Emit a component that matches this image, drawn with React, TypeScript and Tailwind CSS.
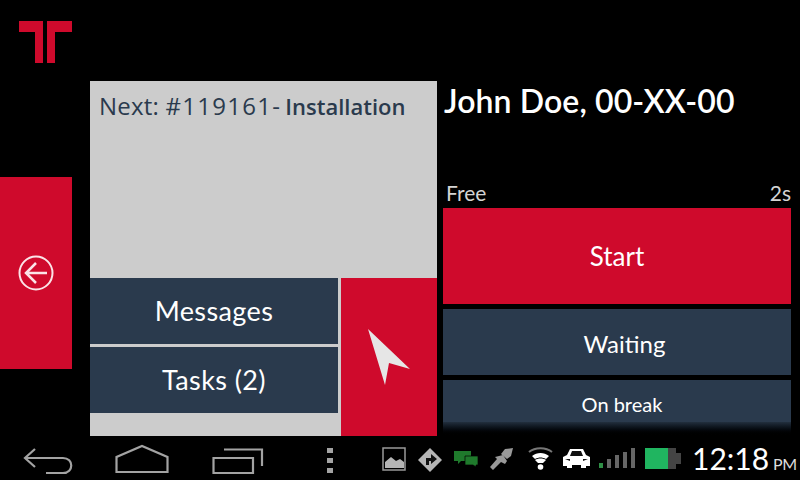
const LATO = "font-['Lato',sans-serif]"

function Logo() {
  return (
    <svg width="56" height="44" viewBox="0 0 56 44" className="block">
      <path d="M1 1H25V43H17V12H1Z M29 1H54V12H37V43H29Z" fill="#cf0a2c" />
    </svg>
  )
}

function NavBar() {
  return (
    <div className="flex items-center h-[44px] bg-black">
      {/* soft keys */}
      <svg width="375" height="44" viewBox="0 0 375 44" fill="none" stroke="#a3a3a3" strokeWidth="2.2" className="shrink-0">
        <path d="M35 13L25 22L35 31" />
        <path d="M25 22H63C74 22 74 37 63 37H46" />
        <path d="M116.500 36V21L142 10L167.500 21V36Z" />
        <path d="M213.500 22H253V37H213.500Z" />
        <path d="M224 13.500H262V30" />
        <path d="M330 12v5M330 22v5M330 32v5" strokeWidth="6" />
      </svg>
      {/* status icons */}
      <svg width="310" height="44" viewBox="375 436 310 44" className="shrink-0">
        <rect x="383" y="448" width="22" height="22" fill="none" stroke="#999" strokeWidth="1.5" />
        <path d="M385 468V462L391 457L396 461L400 459L404 462V468Z" fill="#b5b5b5" />
        <path d="M430 448L442 460L430 472L418 460Z" fill="#b5b5b5" />
        <path d="M426 465V458H431V454L437 459L431 464V461H429V465Z" fill="#111" />
        <path d="M454 451H471V461H461L458 464V461H454Z" fill="#1f7a2c" />
        <path d="M465 456H478V465H476V467L473 465H465Z" fill="#1f7a2c" stroke="#000" strokeWidth="0.7" />
        <path d="M490 467L497 459L495 457L503 455L507 461L505 464L501 462L493 470Z" fill="#999" />
        <path d="M501 454L505 449L513 448L511 456L507 459Z" fill="#999" />
        <path d="M529 452C535 447 546 447 552 452" fill="none" stroke="#777" strokeWidth="2" />
        <path d="M532 456C537 452 544 452 549 456L546 459C542 457 539 457 535 459Z" fill="#fff" />
        <path d="M535 460C538 458 543 458 546 460L543 463H538Z" fill="#fff" />
        <circle cx="540.500" cy="467" r="2.800" fill="#fff" />
        <path d="M563 466V457L567 455L570 449H583L586 455L590 457V466H586V468H581V465H572V468H567V466Z" fill="#fff" />
        <path d="M572 451L570 456H583L581 451Z" fill="#111" />
        <path d="M565 459L570 461V459ZM588 459L583 461V459Z" fill="#111" />
        <rect x="599" y="463" width="4" height="5" fill="#2f8f46" />
        <rect x="607" y="459" width="4" height="9" fill="#666" />
        <rect x="615" y="455" width="4" height="13" fill="#666" />
        <rect x="623" y="452" width="4" height="16" fill="#666" />
        <rect x="631" y="448" width="4" height="20" fill="#666" />
        <rect x="645" y="448" width="23" height="21" fill="#20b560" />
        <rect x="668" y="448" width="8" height="21" fill="#444" />
        <rect x="676" y="453" width="5" height="11" fill="#444" />
      </svg>
      <div className={`${LATO} flex items-baseline text-white ml-[7px] whitespace-nowrap`}>
        <span className="text-[30px] leading-none">12:18</span>
        <span className="text-[16px] leading-none ml-[4px] text-[#ddd] tracking-[-0.5px]">PM</span>
      </div>
    </div>
  )
}

export default function App() {
  return (
    <div className="w-[800px] h-[480px] bg-black overflow-hidden flex flex-col">
      <div className="flex h-[436px]">
        {/* left rail */}
        <div className="w-[72px] shrink-0 flex flex-col relative">
          <div className="absolute left-[18px] top-[20px]">
            <Logo />
          </div>
          <button className="mt-[177px] h-[192px] bg-[#cf0a2c] flex items-center justify-center">
            <svg width="36" height="36" viewBox="0 0 36 36" fill="none" stroke="#fbe3e7" strokeWidth="2">
              <circle cx="18" cy="18" r="16.5" />
              <path d="M18 8L8 18L18 28M8 18H29" strokeWidth="2.5" />
            </svg>
          </button>
        </div>

        {/* job panel */}
        <div className="ml-[18px] mt-[81px] w-[347px] shrink-0 bg-[#cccccc] flex flex-col">
          <div className="h-[197px] pl-[9px] pt-[10px] text-[#2a3a4d] font-['Open_Sans',sans-serif] text-[24px] leading-[30px] whitespace-nowrap tracking-[0.2px]">
            Next: <span className="tracking-[1.3px]">#119161</span><span className="mr-[5px]">-</span>
            <span className="font-semibold text-[22px] tracking-[0px]">Installation</span>
          </div>
          <div className="flex flex-1">
            <div className={`${LATO} w-[248px] flex flex-col gap-[3px] text-white text-[27px] tracking-[0.4px]`}>
              <button className="h-[66px] bg-[#2a3a4d] pt-[1px]">Messages</button>
              <button className="h-[66px] bg-[#2a3a4d] pt-[1px]">Tasks (2)</button>
            </div>
            <button className="ml-[3px] flex-1 bg-[#cf0a2c] flex items-center justify-center">
              <svg width="44" height="58" viewBox="0 0 44 58">
                <path d="M1 1L43 41L22 35L18 57Z" fill="#e6e6e6" />
              </svg>
            </button>
          </div>
        </div>

        {/* status column */}
        <div className={`${LATO} ml-[6px] w-[348px] shrink-0 flex flex-col text-white`}>
          <div className="pt-[82px] pl-[1px] h-[176px] text-[32px] leading-[38px] font-semibold whitespace-nowrap tracking-[0.1px]">
            John Doe, 00-XX-00
          </div>
          <div className="flex justify-between items-end h-[32px] pb-[3px] text-[#d4d4d4] text-[21px] leading-[24px] pl-[3px]">
            <span>Free</span>
            <span>2s</span>
          </div>
          <button className="h-[96px] shrink-0 bg-[#cf0a2c] text-[26px]">Start</button>
          <button className="h-[66px] shrink-0 mt-[5px] bg-[#2a3a4d] text-[24px] pt-[3px] pl-[15px]">Waiting</button>
          <div className="relative flex-1 mt-[5px] overflow-hidden bg-[#2a3a4d] text-center">
            <div className="text-[20px] leading-[24px] pt-[12px] pl-[10px]">On break</div>
            <div className="absolute inset-x-0 bottom-0 h-[14px] bg-gradient-to-b from-[#222f3e] to-black" />
          </div>
        </div>
      </div>
      <NavBar />
    </div>
  )
}
